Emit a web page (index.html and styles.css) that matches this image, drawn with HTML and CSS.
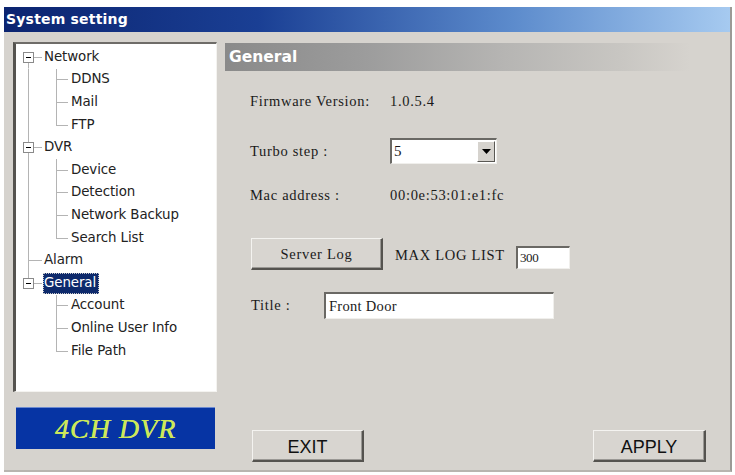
FILE: index.html
```html
<!DOCTYPE html>
<html>
<head>
<meta charset="utf-8">
<link rel="stylesheet" href="styles.css">
</head>
<body>
<div class="window">
  <div class="titlebar">System setting</div>
  <div class="client">
    <div class="left">
      <div class="tree">
        <div class="row top vfirst"><span class="box"></span><span class="lbl">Network</span></div>
        <div class="row child vfull cfull"><span class="lbl">DDNS</span></div>
        <div class="row child vfull cfull"><span class="lbl">Mail</span></div>
        <div class="row child vfull clast"><span class="lbl">FTP</span></div>
        <div class="row top vfull"><span class="box"></span><span class="lbl">DVR</span></div>
        <div class="row child vfull cfull"><span class="lbl">Device</span></div>
        <div class="row child vfull cfull"><span class="lbl">Detection</span></div>
        <div class="row child vfull cfull"><span class="lbl">Network Backup</span></div>
        <div class="row child vfull clast"><span class="lbl">Search List</span></div>
        <div class="row top nobox vfull"><span class="lbl">Alarm</span></div>
        <div class="row top vlast"><span class="box"></span><span class="lbl sel">General</span></div>
        <div class="row child cfull"><span class="lbl">Account</span></div>
        <div class="row child cfull"><span class="lbl">Online User Info</span></div>
        <div class="row child clast"><span class="lbl">File Path</span></div>
      </div>
      <div class="logo">4CH DVR</div>
    </div>
    <div class="right">
      <div class="header">General</div>
      <div class="form">
        <div class="field first">
          <span class="label">Firmware Version:</span>
          <span class="value">1.0.5.4</span>
        </div>
        <div class="field turbo">
          <span class="label">Turbo step :</span>
          <span class="select"><span class="selval">5</span><span class="arrow"><svg width="9" height="5" viewBox="0 0 9 5"><path d="M0 0H9L4.5 5Z" fill="#000"/></svg></span></span>
        </div>
        <div class="field mac">
          <span class="label">Mac address :</span>
          <span class="value">00:0e:53:01:e1:fc</span>
        </div>
        <div class="logrow">
          <span class="btn serverlog">Server Log</span>
          <span class="maxlbl">MAX LOG LIST</span>
          <span class="input maxin">300</span>
        </div>
        <div class="titlerow">
          <span class="label tlabel">Title :</span>
          <span class="input titlein">Front Door</span>
        </div>
      </div>
      <div class="actions">
        <span class="btn big exit">EXIT</span>
        <span class="btn big apply">APPLY</span>
      </div>
    </div>
  </div>
</div>
</body>
</html>
```

FILE: styles.css
```css
html, body {
  margin: 0;
  padding: 0;
  background: #ffffff;
}
body {
  padding-top: 7px;
  width: 735px;
  height: 468px;
  overflow: hidden;
}
.window {
  margin-left: 4px;
  width: 726px;
  height: 463px;
  background: #d6d3ce;
  border-right: 2px solid #9c9a96;
  border-bottom: 2px solid #b8b5b0;
  display: flex;
  flex-direction: column;
}
.titlebar {
  height: 25px;
  line-height: 25px;
  padding-left: 2px;
  background: linear-gradient(to right, #0b2470 0%, #1a3f94 35%, #5c8bcc 70%, #a6caf0 100%);
  color: #fff;
  font-family: "DejaVu Sans", Verdana, sans-serif;
  font-weight: bold;
  font-size: 14px;
  letter-spacing: 0.2px;
}
.client {
  flex: 1;
  display: flex;
  padding: 10px 0 0 9px;
  gap: 8px;
}
.left {
  width: 204px;
  display: flex;
  flex-direction: column;
}
.tree {
  box-sizing: border-box;
  height: 350px;
  background: #fff;
  border-top: 2px solid #6e6c68;
  border-left: 3px solid #55534f;
  border-right: 1px solid #f4f3f0;
  border-bottom: 1px solid #f4f3f0;
  padding-top: 2px;
  font-family: "DejaVu Sans", Verdana, sans-serif;
  font-size: 13.4px;
  letter-spacing: -0.1px;
  color: #222;
}
.row {
  height: 22.6px;
  display: flex;
  align-items: center;
  box-sizing: border-box;
  background-repeat: no-repeat;
}
.row.top {
  padding-left: 7px;
}
.row.top.nobox {
  padding-left: 27px;
}
.row.child {
  padding-left: 54px;
}
/* tree connector lines (top-level vertical at 12px, child vertical at 40px) */
.row.top.vfirst {
  background-image: linear-gradient(#b4b4b4, #b4b4b4), linear-gradient(#b4b4b4, #b4b4b4);
  background-position: 12px 100%, 12px 50%;
  background-size: 1px 50%, 14px 1px;
}
.row.top.vfull {
  background-image: linear-gradient(#b4b4b4, #b4b4b4), linear-gradient(#b4b4b4, #b4b4b4);
  background-position: 12px 0, 12px 50%;
  background-size: 1px 100%, 14px 1px;
}
.row.top.vlast {
  background-image: linear-gradient(#b4b4b4, #b4b4b4), linear-gradient(#b4b4b4, #b4b4b4);
  background-position: 12px 0, 12px 50%;
  background-size: 1px 50%, 14px 1px;
}
.row.child.cfull {
  background-image: linear-gradient(#b4b4b4, #b4b4b4), linear-gradient(#b4b4b4, #b4b4b4);
  background-position: 40px 0, 40px 50%;
  background-size: 1px 100%, 12px 1px;
}
.row.child.clast {
  background-image: linear-gradient(#b4b4b4, #b4b4b4), linear-gradient(#b4b4b4, #b4b4b4);
  background-position: 40px 0, 40px 50%;
  background-size: 1px 50%, 12px 1px;
}
.row.child.vfull.cfull {
  background-image: linear-gradient(#b4b4b4, #b4b4b4), linear-gradient(#b4b4b4, #b4b4b4), linear-gradient(#b4b4b4, #b4b4b4);
  background-position: 12px 0, 40px 0, 40px 50%;
  background-size: 1px 100%, 1px 100%, 12px 1px;
}
.row.child.vfull.clast {
  background-image: linear-gradient(#b4b4b4, #b4b4b4), linear-gradient(#b4b4b4, #b4b4b4), linear-gradient(#b4b4b4, #b4b4b4);
  background-position: 12px 0, 40px 0, 40px 50%;
  background-size: 1px 100%, 1px 50%, 12px 1px;
}
.box {
  width: 9px;
  height: 9px;
  border: 1px solid #8a8a8a;
  background: #fff;
  margin-right: 9px;
  display: flex;
  align-items: center;
  justify-content: center;
  flex: none;
}
.box::after {
  content: "";
  width: 5px;
  height: 1px;
  background: #000;
}
.lbl {
  padding: 1px 2px 2px 1px;
  line-height: 16px;
}
.lbl.sel {
  padding: 2px 3px 3px 1px;
  background: #0e2a6c;
  color: #fff;
  outline: 1px dotted #c8c8c8;
  outline-offset: -1px;
}
.logo {
  margin: 15px 0 0 3px;
  width: 199px;
  height: 42px;
  background: #0634a4;
  border-top: 1px solid #6c8ad0;
  box-sizing: border-box;
  display: flex;
  align-items: center;
  justify-content: center;
  color: #cde85a;
  font-family: "Liberation Serif", "Times New Roman", serif;
  font-style: italic;
  font-size: 28px;
  letter-spacing: 1px;
  padding-top: 1px;
  text-shadow: 0.4px 0 0 #cde85a;
}
.right {
  flex: 1;
  display: flex;
  flex-direction: column;
}
.header {
  margin-top: 1px;
  width: 465px;
  height: 28px;
  line-height: 28px;
  padding-left: 4px;
  box-sizing: border-box;
  background: linear-gradient(to right, #8a8a8a 0%, #9c9c9c 30%, #b6b5b3 60%, #c8c6c2 85%, #d6d3ce 100%);
  color: #fff;
  font-family: "DejaVu Sans", Verdana, sans-serif;
  font-weight: bold;
  font-size: 15.5px;
}
.form {
  padding-left: 25px;
  font-family: "Liberation Serif", "Times New Roman", serif;
  font-size: 14.5px;
  letter-spacing: 0.7px;
  color: #1a1a1a;
  display: flex;
  flex-direction: column;
}
.field {
  display: flex;
  align-items: center;
  height: 22px;
}
.field .label {
  width: 140px;
  flex: none;
}
.field.first {
  margin-top: 19px;
}
.field.turbo {
  margin-top: 26px;
  height: 26px;
}
.field.mac {
  margin-top: 20px;
}
.select {
  box-sizing: border-box;
  width: 107px;
  height: 26px;
  background: #fff;
  border-top: 2px solid #6a6864;
  border-left: 2px solid #6a6864;
  border-right: 1px solid #f0efec;
  border-bottom: 1px solid #f0efec;
  display: flex;
  align-items: stretch;
}
.selval {
  flex: 1;
  padding-left: 2px;
  line-height: 22px;
  font-size: 15px;
}
.arrow {
  width: 16px;
  margin: 1px 1px 1px 0;
  background: #d6d3ce;
  border-top: 1px solid #fff;
  border-left: 1px solid #fff;
  border-right: 1px solid #5a5854;
  border-bottom: 1px solid #5a5854;
  display: flex;
  align-items: center;
  justify-content: center;
}
.logrow {
  margin-top: 32px;
  display: flex;
  align-items: center;
  height: 32px;
}
.btn {
  box-sizing: border-box;
  display: flex;
  align-items: center;
  justify-content: center;
  background: #d8d5d0;
  border-top: 1px solid #f4f3f0;
  border-left: 1px solid #f4f3f0;
  border-right: 2px solid #55534f;
  border-bottom: 2px solid #55534f;
  box-shadow: inset -1px -1px 0 #9a9894;
}
.serverlog {
  margin-left: 1px;
  width: 132px;
  height: 32px;
  padding-top: 1px;
}
.maxlbl {
  margin-left: 12px;
  padding-top: 2px;
}
.input {
  box-sizing: border-box;
  background: #fff;
  border-top: 2px solid #6a6864;
  border-left: 2px solid #6a6864;
  border-right: 1px solid #f0efec;
  border-bottom: 1px solid #f0efec;
  display: flex;
  align-items: center;
  padding-left: 2px;
  letter-spacing: 0.3px;
}
.maxin {
  margin-left: 11px;
  margin-top: 6px;
  width: 54px;
  height: 23px;
  font-size: 13px;
  letter-spacing: -0.3px;
}
.titlerow {
  margin-top: 22px;
  display: flex;
  align-items: center;
  height: 27px;
}
.tlabel {
  width: 73px;
  margin-left: 1px;
}
.titlein {
  width: 230px;
  height: 27px;
  padding-left: 3px;
}
.actions {
  margin-top: auto;
  margin-bottom: 8px;
  padding: 0 24px 0 27px;
  display: flex;
  justify-content: space-between;
  font-family: "Liberation Sans", Arial, sans-serif;
  font-size: 18px;
  color: #111;
}
.btn.big {
  height: 32px;
  padding-top: 3px;
}
.exit {
  width: 112px;
}
.apply {
  width: 113px;
}
```
